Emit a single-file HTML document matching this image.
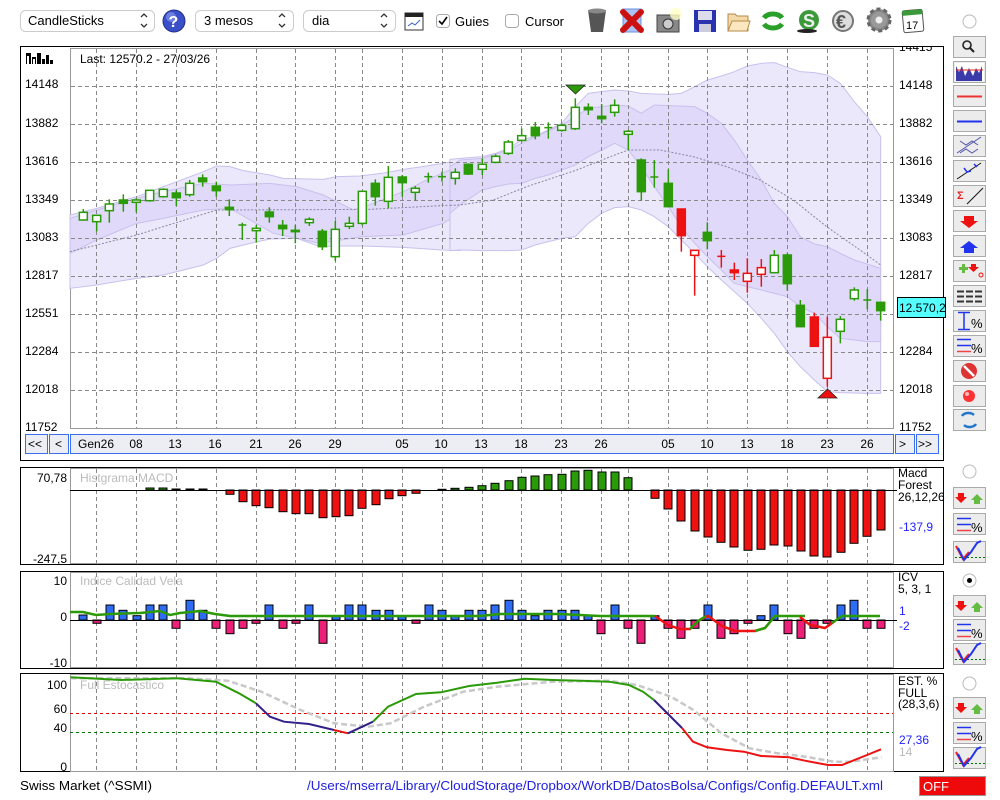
<!DOCTYPE html>
<html><head><meta charset="utf-8"><style>
html,body{margin:0;padding:0;background:#fff;width:1000px;height:800px;overflow:hidden}
svg{display:block;font-family:"Liberation Sans",sans-serif}
</style></head><body>
<svg width="1000" height="800" viewBox="0 0 1000 800" xmlns="http://www.w3.org/2000/svg">
<defs><clipPath id="topclip"><rect x="895" y="47" width="48" height="10"/></clipPath></defs>
<!-- TOOLBAR -->
<g font-size="13" fill="#000">
<rect x="20.5" y="10.5" width="134" height="21" rx="5" fill="#fff" stroke="#ccc"/>
<text x="28" y="25">CandleSticks</text>
<path d="M141 17l3-3 3 3M141 24l3 3 3-3" fill="none" stroke="#333" stroke-width="1.3"/>
<circle cx="174" cy="21" r="11" fill="#3a4fc8" stroke="#22308a"/>
<circle cx="171" cy="17" r="5" fill="#8ea0f0" opacity=".6"/>
<text x="168.5" y="27" font-size="16" font-weight="bold" fill="#fff">?</text>
<rect x="195.5" y="10.5" width="98" height="21" rx="5" fill="#fff" stroke="#ccc"/>
<text x="204" y="25">3 mesos</text>
<path d="M279 17l3-3 3 3M279 24l3 3 3-3" fill="none" stroke="#333" stroke-width="1.3"/>
<rect x="303.5" y="10.5" width="92" height="21" rx="5" fill="#fff" stroke="#ccc"/>
<text x="312" y="25">dia</text>
<path d="M381 17l3-3 3 3M381 24l3 3 3-3" fill="none" stroke="#333" stroke-width="1.3"/>
<rect x="405" y="13" width="18" height="17" fill="#fff" stroke="#333"/>
<rect x="405" y="13" width="18" height="4" fill="#222"/>
<path d="M408 26l4-3 3 2 5-5" stroke="#36c" fill="none"/>
<rect x="436.5" y="14.5" width="13" height="13" rx="3" fill="#fff" stroke="#aaa"/>
<path d="M439 21l3 3 5-7" fill="none" stroke="#000" stroke-width="1.6"/>
<text x="455" y="26">Guies</text>
<rect x="505.5" y="14.5" width="13" height="13" rx="3" fill="#fff" stroke="#aaa"/>
<text x="525" y="26">Cursor</text>
</g>
<!-- toolbar icons -->
<g>
<path d="M588 10h18l-3 22h-12z" fill="#555"/><ellipse cx="597" cy="11" rx="9" ry="2.5" fill="#888"/>
<rect x="623" y="9" width="18" height="23" fill="#a9c4f5" stroke="#6a8fe0"/>
<path d="M623 12l18 18M641 12l-18 18" stroke="#c11" stroke-width="6" stroke-linecap="round"/>
<rect x="657" y="15" width="22" height="17" fill="#888" stroke="#444"/><circle cx="668" cy="24" r="5" fill="#ccc" stroke="#333"/><circle cx="676" cy="14" r="6" fill="#ffffc8" opacity=".8"/>
<rect x="694" y="10" width="22" height="22" fill="#2933b0"/><rect x="698" y="11" width="14" height="9" fill="#dde"/><rect x="699" y="24" width="12" height="8" fill="#ccd"/>
<path d="M728 14h7l2 2h11v15h-20z" fill="#f3d9a8" stroke="#b58a4a"/><path d="M728 31l4-10h18l-3 10z" fill="#fbe7c0" stroke="#b58a4a"/>
<path d="M764 18a10 7 0 0 1 18 0" fill="none" stroke="#2aa02a" stroke-width="5"/><path d="M782 24a10 7 0 0 1-18 0" fill="none" stroke="#2aa02a" stroke-width="5"/>
<circle cx="809" cy="20" r="10" fill="#3a9a3a"/><text x="803" y="27" font-size="18" font-weight="bold" fill="#eee">S</text><ellipse cx="807" cy="31" rx="10" ry="2" fill="#222"/>
<circle cx="843" cy="21" r="10" fill="#ddd" stroke="#777" stroke-width="2"/><text x="836" y="28" font-size="18" font-weight="bold" fill="#555">€</text>
<circle cx="879" cy="20" r="11" fill="#888" stroke="#666" stroke-width="3" stroke-dasharray="4 3"/><circle cx="879" cy="20" r="8" fill="#999"/><circle cx="879" cy="20" r="3.5" fill="#eee"/>
<rect x="903" y="10" width="20" height="22" rx="2" fill="#fff" stroke="#555" transform="rotate(-5 913 21)"/><rect x="903" y="10" width="20" height="5" fill="#3a9a3a" transform="rotate(-5 913 21)"/><text x="906" y="29" font-size="11">17</text>
<circle cx="969.5" cy="21.5" r="6.5" fill="#fff" stroke="#bbb"/>
</g>

<!-- MAIN CHART FRAME -->
<rect x="20.5" y="46.5" width="923" height="414" fill="#fff" stroke="#000"/>
<rect x="70.5" y="48.5" width="823" height="380" fill="#fff" stroke="#999"/>
<g transform="translate(20,40) scale(0.33333)">
<path d="M150,525 230,505 350,470 430,440 550,395 590,378 630,380 670,392 750,405 790,415 910,418 950,410 1020,408 1100,398 1150,388 1220,378 1300,364 1320,360 L1320,632 1266,630 1150,622 1027,618 950,618 900,620 830,595 750,597 700,608 630,625 590,655 550,675 510,685 430,705 350,715 230,735 150,745Z" fill="#ece8fc" stroke="#c8c0ec" stroke-width="3"/>
<path d="M150,535 230,510 350,475 430,455 550,430 590,432 630,435 750,430 830,440 910,465 1000,510 1060,490 1150,455 1220,420 1300,385 1320,380 L1320,520 1270,550 1150,585 1027,590 900,610 760,580 630,505 550,510 430,535 350,550 230,600 150,640Z" fill="#e0d9fa" stroke="#c8c0ec" stroke-width="3"/>
<path d="M150,635 350,585 590,510 630,510 1050,508 1320,494" fill="none" stroke="#8a86a0" stroke-width="3" stroke-dasharray="6 5"/>
</g>
<g transform="translate(460,40) scale(0.33333)">
<path d="M-30,358 0,355 67,350 107,340 145,325 185,300 226,288 265,270 305,250 346,200 385,160 425,155 464,150 505,153 544,160 583,162 625,163 664,160 704,140 742,120 784,108 823,95 862,78 904,70 943,68 982,82 1021,95 1063,98 1102,105 1141,130 1183,185 1222,230 1262,290 L1262,1060 1222,1060 1141,1058 1102,1055 1063,1020 1021,980 982,935 943,880 904,835 862,790 823,755 784,720 742,680 704,640 664,600 625,560 583,530 544,510 505,500 464,503 425,520 385,550 346,590 305,595 265,605 226,615 185,630 145,632 107,632 67,632 0,630 -30,632Z" fill="#ece8fc" stroke="#c8c0ec" stroke-width="3"/>
<path d="M-30,380 0,360 67,355 145,330 226,290 305,255 346,230 385,205 464,195 505,198 544,220 583,195 625,197 704,200 742,220 784,250 823,300 862,360 904,420 943,490 982,530 1021,590 1063,612 1102,620 1141,640 1183,660 1262,685 L1262,905 1222,905 1183,900 1141,895 1102,860 1063,820 1021,800 982,770 943,760 904,750 862,740 823,730 784,690 742,650 704,610 664,560 625,500 583,440 544,380 505,330 464,310 425,330 385,350 346,375 305,390 265,405 226,415 185,430 145,432 107,440 67,450 0,495 -30,520Z" fill="#e0d9fa" stroke="#c8c0ec" stroke-width="3"/>
<path d="M-30,496 0,495 100,480 200,440 350,390 464,345 505,330 600,330 700,350 800,380 900,420 1000,480 1100,560 1200,630 1262,675" fill="none" stroke="#8a86a0" stroke-width="3" stroke-dasharray="6 5"/>
</g>
<g stroke="#888" stroke-dasharray="4 3" stroke-width="1">
<path d="M71 86.5H893M71 124.5H893M71 162.5H893M71 200.5H893M71 238.5H893M71 276.5H893M71 314.5H893M71 352.5H893M71 390.5H893"/>
<path d="M96.5 49V428M136.5 49V428M176.5 49V428M216.5 49V428M256.5 49V428M295.5 49V428M335.5 49V428M362.5 49V428M402.5 49V428M442.5 49V428M482.5 49V428M521.5 49V428M561.5 49V428M601.5 49V428M628.5 49V428M668.5 49V428M707.5 49V428M747.5 49V428M787.5 49V428M827.5 49V428M867.5 49V428"/>
</g>
<g transform="translate(20,40) scale(0.33333)" stroke="#2a9a08" stroke-width="4.5" fill="#fff">
<line x1="190" y1="507" x2="190" y2="542"/><rect x="178" y="517" width="24" height="23"/>
<line x1="230" y1="526" x2="230" y2="574"/><rect x="218" y="526" width="24" height="19"/>
<line x1="268" y1="478" x2="268" y2="548"/><rect x="256" y="492" width="24" height="20"/>
<line x1="310" y1="463" x2="310" y2="515"/><rect x="298" y="480" width="24" height="10" fill="#2a9a08"/>
<line x1="349" y1="475" x2="349" y2="517"/><rect x="337" y="480" width="24" height="7"/>
<line x1="389" y1="451" x2="389" y2="485"/><rect x="377" y="451" width="24" height="31"/>
<line x1="430" y1="445" x2="430" y2="473"/><rect x="418" y="448" width="24" height="22"/>
<line x1="469" y1="450" x2="469" y2="498"/><rect x="457" y="459" width="24" height="14" fill="#2a9a08"/>
<line x1="509" y1="420" x2="509" y2="470"/><rect x="497" y="430" width="24" height="34"/>
<line x1="548" y1="403" x2="548" y2="440"/><rect x="536" y="414" width="24" height="11" fill="#2a9a08"/>
<line x1="589" y1="425" x2="589" y2="470"/><rect x="577" y="438" width="24" height="14" fill="#2a9a08"/>
<line x1="628" y1="478" x2="628" y2="528"/><rect x="616" y="502" width="24" height="7" fill="#2a9a08"/>
<line x1="667" y1="548" x2="667" y2="600"/><line x1="655" y1="555" x2="679" y2="555"/>
<line x1="709" y1="555" x2="709" y2="608"/><rect x="697" y="565" width="24" height="7"/>
<line x1="748" y1="502" x2="748" y2="548"/><rect x="736" y="516" width="24" height="14" fill="#2a9a08"/>
<line x1="788" y1="540" x2="788" y2="588"/><rect x="776" y="556" width="24" height="10" fill="#2a9a08"/>
<line x1="826" y1="555" x2="826" y2="610"/><rect x="814" y="571" width="24" height="4" fill="#2a9a08"/>
<line x1="868" y1="532" x2="868" y2="558"/><rect x="856" y="538" width="24" height="10"/>
<line x1="907" y1="567" x2="907" y2="630"/><rect x="895" y="574" width="24" height="46" fill="#2a9a08"/>
<line x1="946" y1="543" x2="946" y2="663"/><rect x="934" y="568" width="24" height="82"/>
<line x1="988" y1="530" x2="988" y2="567"/><rect x="976" y="550" width="24" height="9"/>
<line x1="1027" y1="454" x2="1027" y2="556"/><rect x="1015" y="454" width="24" height="96"/>
<line x1="1066" y1="418" x2="1066" y2="497"/><rect x="1054" y="430" width="24" height="40" fill="#2a9a08"/>
<line x1="1105" y1="378" x2="1105" y2="505"/><rect x="1093" y="412" width="24" height="72"/>
<line x1="1147" y1="405" x2="1147" y2="470"/><rect x="1135" y="411" width="24" height="17" fill="#2a9a08"/>
<line x1="1186" y1="438" x2="1186" y2="482"/><rect x="1174" y="445" width="24" height="12"/>
<line x1="1225" y1="398" x2="1225" y2="428"/><line x1="1213" y1="410" x2="1237" y2="410"/>
<line x1="1266" y1="395" x2="1266" y2="425"/><line x1="1254" y1="410" x2="1278" y2="410"/>
<line x1="1306" y1="385" x2="1306" y2="434"/><rect x="1294" y="397" width="24" height="18"/>
</g>
<g transform="translate(460,40) scale(0.33333)" stroke="#2a9a08" stroke-width="4.5" fill="#fff">
<line x1="25" y1="370" x2="25" y2="405"/><rect x="13" y="373" width="24" height="29" fill="#2a9a08"/>
<line x1="67" y1="355" x2="67" y2="405"/><rect x="55" y="373" width="24" height="15"/>
<line x1="107" y1="343" x2="107" y2="370"/><rect x="95" y="349" width="24" height="18"/>
<line x1="145" y1="300" x2="145" y2="345"/><rect x="133" y="306" width="24" height="34"/>
<line x1="185" y1="265" x2="185" y2="305"/><rect x="173" y="287" width="24" height="14"/>
<line x1="226" y1="246" x2="226" y2="298"/><rect x="214" y="262" width="24" height="25" fill="#2a9a08"/>
<line x1="265" y1="247" x2="265" y2="296"/><line x1="253" y1="263" x2="277" y2="263"/>
<line x1="305" y1="250" x2="305" y2="275"/><rect x="293" y="256" width="24" height="15"/>
<line x1="346" y1="175" x2="346" y2="270"/><rect x="334" y="202" width="24" height="64"/>
<line x1="385" y1="190" x2="385" y2="225"/><rect x="373" y="202" width="24" height="7" fill="#2a9a08"/>
<line x1="425" y1="192" x2="425" y2="250"/><rect x="413" y="229" width="24" height="7" fill="#2a9a08"/>
<line x1="464" y1="178" x2="464" y2="230"/><rect x="452" y="196" width="24" height="21"/>
<line x1="505" y1="270" x2="505" y2="330"/><rect x="493" y="274" width="24" height="9"/>
<line x1="544" y1="355" x2="544" y2="482"/><rect x="532" y="360" width="24" height="95" fill="#2a9a08"/>
<line x1="583" y1="360" x2="583" y2="443"/><line x1="571" y1="411" x2="595" y2="411"/>
<line x1="625" y1="388" x2="625" y2="502"/><rect x="613" y="430" width="24" height="70" fill="#2a9a08"/>
<line x1="742" y1="547" x2="742" y2="628"/><rect x="730" y="577" width="24" height="25" fill="#2a9a08"/>
<line x1="943" y1="630" x2="943" y2="700"/><rect x="931" y="646" width="24" height="52"/>
<line x1="982" y1="640" x2="982" y2="752"/><rect x="970" y="645" width="24" height="86" fill="#2a9a08"/>
<line x1="1021" y1="780" x2="1021" y2="862"/><rect x="1009" y="796" width="24" height="64" fill="#2a9a08"/>
<line x1="1141" y1="828" x2="1141" y2="910"/><rect x="1129" y="838" width="24" height="36"/>
<line x1="1183" y1="742" x2="1183" y2="782"/><rect x="1171" y="750" width="24" height="26"/>
<line x1="1222" y1="747" x2="1222" y2="808"/><line x1="1210" y1="780" x2="1234" y2="780"/>
<line x1="1262" y1="787" x2="1262" y2="842"/><rect x="1250" y="787" width="24" height="25" fill="#2a9a08"/>
<g stroke="#ee1111">
<line x1="664" y1="507" x2="664" y2="635"/><rect x="652" y="507" width="24" height="80" fill="#ee1111"/>
<line x1="704" y1="631" x2="704" y2="767"/><rect x="692" y="631" width="24" height="15"/>
<line x1="784" y1="630" x2="784" y2="683"/><line x1="772" y1="649" x2="796" y2="649"/>
<line x1="823" y1="668" x2="823" y2="720"/><rect x="811" y="690" width="24" height="8" fill="#ee1111"/>
<line x1="862" y1="655" x2="862" y2="758"/><rect x="850" y="700" width="24" height="24"/>
<line x1="904" y1="657" x2="904" y2="740"/><rect x="892" y="683" width="24" height="20"/>
<line x1="1063" y1="818" x2="1063" y2="921"/><rect x="1051" y="831" width="24" height="88" fill="#ee1111"/>
<line x1="1102" y1="830" x2="1102" y2="1040"/><rect x="1090" y="892" width="24" height="123"/>
</g>
</g>
<path d="M566 85h19l-9.5 9z" fill="#2a9a08" stroke="#222" stroke-width=".8"/>
<path d="M818 398h19l-9.5-9z" fill="#ee1111" stroke="#222" stroke-width=".8"/>
<g font-size="12" fill="#000">
<text x="80" y="63">Last: 12570.2 - 27/03/26</text>
<text x="25" y="88">14148</text><text x="25" y="127">13882</text><text x="25" y="165">13616</text><text x="25" y="203">13349</text><text x="25" y="241">13083</text><text x="25" y="279">12817</text><text x="25" y="317">12551</text><text x="25" y="355">12284</text><text x="25" y="393">12018</text><text x="25" y="431">11752</text>
<text x="899" y="89">14148</text><text x="899" y="127">13882</text><text x="899" y="165">13616</text><text x="899" y="203">13349</text><text x="899" y="241">13083</text><text x="899" y="279">12817</text><text x="899" y="355">12284</text><text x="899" y="393">12018</text><text x="899" y="431">11752</text>
<text x="899" y="51" font-size="12" clip-path="url(#topclip)">14415</text>
</g>
<rect x="26" y="53" width="5" height="11" fill="#000"/><rect x="32" y="57" width="4" height="7" fill="#000"/><rect x="37" y="53" width="4" height="11" fill="#000"/><rect x="42" y="59" width="3" height="5" fill="#000"/><rect x="46" y="55" width="3" height="9" fill="#000"/><rect x="50" y="60" width="3" height="4" fill="#000"/>
<rect x="27" y="56" width="2" height="8" fill="#fff"/><rect x="33" y="59" width="2" height="5" fill="#fff"/>
<rect x="897.5" y="297.5" width="48" height="20" fill="#5ff" stroke="#000"/>
<text x="899" y="312" font-size="12">12.570,2</text>
<g font-size="12">
<rect x="25.5" y="434.5" width="22" height="19" fill="#eceef3" stroke="#3a6ff0"/><text x="28" y="448">&lt;&lt;</text>
<rect x="49.5" y="434.5" width="19" height="19" fill="#eceef3" stroke="#3a6ff0"/><text x="55" y="448">&lt;</text>
<rect x="70.5" y="434.5" width="823" height="19" fill="#eceef3" stroke="#3a6ff0"/>
<rect x="895.5" y="434.5" width="19" height="19" fill="#eceef3" stroke="#3a6ff0"/><text x="899" y="448">&gt;</text>
<rect x="916.5" y="434.5" width="22" height="19" fill="#eceef3" stroke="#3a6ff0"/><text x="918" y="448">&gt;&gt;</text>
<g text-anchor="middle">
<text x="96" y="448">Gen26</text><text x="136" y="448">08</text><text x="175" y="448">13</text><text x="215" y="448">16</text><text x="256" y="448">21</text><text x="295" y="448">26</text><text x="335" y="448">29</text><text x="402" y="448">05</text><text x="441" y="448">10</text><text x="481" y="448">13</text><text x="521" y="448">18</text><text x="561" y="448">23</text><text x="601" y="448">26</text><text x="668" y="448">05</text><text x="707" y="448">10</text><text x="747" y="448">13</text><text x="787" y="448">18</text><text x="827" y="448">23</text><text x="867" y="448">26</text>
</g></g>

<rect x="20.5" y="467.5" width="923" height="97" fill="#fff" stroke="#000"/>
<rect x="70.5" y="468.5" width="823" height="95" fill="#fff" stroke="#999"/>
<rect x="20.5" y="571.5" width="923" height="97" fill="#fff" stroke="#000"/>
<rect x="70.5" y="572.5" width="823" height="95" fill="#fff" stroke="#999"/>
<rect x="20.5" y="673.5" width="923" height="98" fill="#fff" stroke="#000"/>
<rect x="70.5" y="674.5" width="823" height="97" fill="#fff" stroke="#999"/>
<g stroke="#888" stroke-dasharray="4 3">
<path d="M96.5 469V563M136.5 469V563M176.5 469V563M216.5 469V563M256.5 469V563M295.5 469V563M335.5 469V563M362.5 469V563M402.5 469V563M442.5 469V563M482.5 469V563M521.5 469V563M561.5 469V563M601.5 469V563M628.5 469V563M668.5 469V563M707.5 469V563M747.5 469V563M787.5 469V563M827.5 469V563M867.5 469V563"/>
<path d="M96.5 573V667M136.5 573V667M176.5 573V667M216.5 573V667M256.5 573V667M295.5 573V667M335.5 573V667M362.5 573V667M402.5 573V667M442.5 573V667M482.5 573V667M521.5 573V667M561.5 573V667M601.5 573V667M628.5 573V667M668.5 573V667M707.5 573V667M747.5 573V667M787.5 573V667M827.5 573V667M867.5 573V667"/>
<path d="M96.5 675V771M136.5 675V771M176.5 675V771M216.5 675V771M256.5 675V771M295.5 675V771M335.5 675V771M362.5 675V771M402.5 675V771M442.5 675V771M482.5 675V771M521.5 675V771M561.5 675V771M601.5 675V771M628.5 675V771M668.5 675V771M707.5 675V771M747.5 675V771M787.5 675V771M827.5 675V771M867.5 675V771"/>
</g>
<g font-size="12"><text x="80" y="482" fill="#bbb">Histgrama MACD</text>
<text x="67" y="482" text-anchor="end">70,78</text><text x="67" y="563" text-anchor="end">-247,5</text>
<text x="898" y="477">Macd</text><text x="898" y="489">Forest</text><text x="898" y="501">26,12,26</text><text x="899" y="531" fill="#22f">-137,9</text></g>
<g stroke="#000" stroke-width="1" fill="#2a9a08">
<rect x="146" y="488" width="8" height="2"/><rect x="159" y="488" width="8" height="2"/><rect x="172" y="489" width="8" height="1"/><rect x="186" y="489" width="8" height="1"/><rect x="199" y="489" width="8" height="1"/>
<rect x="438" y="489.3" width="8" height="0.7"/><rect x="451" y="488.3" width="8" height="1.7"/><rect x="465" y="487.3" width="8" height="2.7"/><rect x="478" y="485.7" width="8" height="4.3"/><rect x="491" y="483.3" width="8" height="6.7"/><rect x="505" y="480.7" width="8" height="9.3"/><rect x="518" y="477.3" width="8" height="12.7"/><rect x="531" y="476" width="8" height="14"/><rect x="544" y="474.7" width="8" height="15.3"/><rect x="558" y="474.3" width="8" height="15.7"/><rect x="571" y="471" width="8" height="19"/><rect x="584" y="470.3" width="8" height="19.7"/><rect x="598" y="472" width="8" height="18"/><rect x="611" y="472" width="8" height="18"/><rect x="624" y="477.7" width="8" height="12.3"/>
</g>
<g stroke="#000" stroke-width="1" fill="#ee1111">
<rect x="226" y="490" width="8" height="4.3"/><rect x="239" y="490" width="8" height="11.7"/><rect x="252" y="490" width="8" height="15.7"/><rect x="265" y="490" width="8" height="17.7"/><rect x="279" y="490" width="8" height="21.7"/><rect x="292" y="490" width="8" height="23.7"/><rect x="305" y="490" width="8" height="23.7"/><rect x="319" y="490" width="8" height="27.7"/><rect x="332" y="490" width="8" height="26.7"/><rect x="345" y="490" width="8" height="25.7"/><rect x="358" y="490" width="8" height="18.3"/><rect x="372" y="490" width="8" height="14.7"/><rect x="385" y="490" width="8" height="8.7"/><rect x="398" y="490" width="8" height="5.7"/><rect x="412" y="490" width="8" height="3.3"/>
<rect x="651" y="490" width="8" height="8.3"/><rect x="664" y="490" width="8" height="19"/><rect x="677" y="490" width="8" height="31"/><rect x="691" y="490" width="8" height="41"/><rect x="704" y="490" width="8" height="47"/><rect x="717" y="490" width="8" height="52.3"/><rect x="730" y="490" width="8" height="57"/><rect x="744" y="490" width="8" height="60.3"/><rect x="757" y="490" width="8" height="59.3"/><rect x="770" y="490" width="8" height="55"/><rect x="784" y="490" width="8" height="56"/><rect x="797" y="490" width="8" height="61"/><rect x="810" y="490" width="8" height="66"/><rect x="823" y="490" width="8" height="67"/><rect x="837" y="490" width="8" height="62.3"/><rect x="850" y="490" width="8" height="53.3"/><rect x="863" y="490" width="8" height="46.3"/><rect x="877" y="490" width="8" height="40"/>
</g>
<line x1="70" y1="490.5" x2="897" y2="490.5" stroke="#000"/>
<g font-size="12"><text x="80" y="585" fill="#bbb">Indice Calidad Vela</text>
<text x="67" y="585" text-anchor="end">10</text><text x="67" y="621" text-anchor="end">0</text><text x="67" y="667" text-anchor="end">-10</text>
<text x="898" y="581">ICV</text><text x="898" y="593">5, 3, 1</text><text x="899" y="615" fill="#22f">1</text><text x="899" y="630" fill="#22f">-2</text></g>
<g stroke="#000" stroke-width="1" fill="#2f6cf5">
<rect x="79" y="615" width="8" height="5"/><rect x="106" y="605" width="8" height="15"/><rect x="119" y="610.3" width="8" height="9.7"/><rect x="133" y="615.7" width="8" height="4.3"/><rect x="146" y="605" width="8" height="15"/><rect x="159" y="605" width="8" height="15"/><rect x="186" y="600.3" width="8" height="19.7"/><rect x="199" y="610.3" width="8" height="9.7"/><rect x="265" y="605" width="8" height="15"/><rect x="305" y="605" width="8" height="15"/><rect x="332" y="615.7" width="8" height="4.3"/><rect x="345" y="605" width="8" height="15"/><rect x="358" y="605" width="8" height="15"/><rect x="372" y="610.3" width="8" height="9.7"/><rect x="385" y="610.3" width="8" height="9.7"/><rect x="398" y="615.7" width="8" height="4.3"/><rect x="425" y="605" width="8" height="15"/><rect x="438" y="610.3" width="8" height="9.7"/><rect x="451" y="615.7" width="8" height="4.3"/><rect x="465" y="610.3" width="8" height="9.7"/><rect x="478" y="610.3" width="8" height="9.7"/><rect x="491" y="605" width="8" height="15"/><rect x="505" y="600.3" width="8" height="19.7"/><rect x="518" y="610.3" width="8" height="9.7"/><rect x="531" y="615.7" width="8" height="4.3"/><rect x="544" y="610.3" width="8" height="9.7"/><rect x="558" y="610.3" width="8" height="9.7"/><rect x="571" y="610.3" width="8" height="9.7"/><rect x="584" y="615.7" width="8" height="4.3"/><rect x="611" y="605" width="8" height="15"/><rect x="651" y="615.7" width="8" height="4.3"/><rect x="704" y="605" width="8" height="15"/><rect x="757" y="615.7" width="8" height="4.3"/><rect x="770" y="605" width="8" height="15"/><rect x="837" y="605" width="8" height="15"/><rect x="850" y="600.3" width="8" height="19.7"/>
</g>
<g stroke="#000" stroke-width="1" fill="#ee1f78">
<rect x="93" y="620" width="8" height="3.3"/><rect x="172" y="620" width="8" height="8.3"/><rect x="212" y="620" width="8" height="8.3"/><rect x="226" y="620" width="8" height="13.7"/><rect x="239" y="620" width="8" height="8.3"/><rect x="252" y="620" width="8" height="3.3"/><rect x="279" y="620" width="8" height="8.3"/><rect x="292" y="620" width="8" height="3.3"/><rect x="319" y="620" width="8" height="23.3"/><rect x="412" y="620" width="8" height="3.3"/><rect x="597" y="620" width="8" height="13.7"/><rect x="624" y="620" width="8" height="8.3"/><rect x="637" y="620" width="8" height="23.3"/><rect x="664" y="620" width="8" height="8.3"/><rect x="677" y="620" width="8" height="18.3"/><rect x="691" y="620" width="8" height="8.3"/><rect x="717" y="620" width="8" height="18.3"/><rect x="730" y="620" width="8" height="13.7"/><rect x="744" y="620" width="8" height="3.3"/><rect x="784" y="620" width="8" height="13.7"/><rect x="797" y="620" width="8" height="18.3"/><rect x="810" y="620" width="8" height="8.3"/><rect x="823" y="620" width="8" height="3.3"/><rect x="863" y="620" width="8" height="8.3"/><rect x="877" y="620" width="8" height="8.3"/>
</g>
<line x1="70" y1="620.5" x2="897" y2="620.5" stroke="#000"/>
<polyline points="70,612 83,612 96,615 110,614 140,613 160,611 170,615 180,613 200,611 215,614 230,616 300,616 380,616 480,616 500,614 560,614 600,616 630,616 655,616" fill="none" stroke="#2a9a08" stroke-width="2.5"/>
<polyline points="655,616 668,625 680,629 690,629 698,621 708,616 722,626 735,631 755,631 765,628 775,616" fill="none" stroke="#ee1111" stroke-width="2.5"/>
<polyline points="690,629 698,621 706,616" fill="none" stroke="#2a9a08" stroke-width="2.5"/>
<polyline points="755,631 765,628 775,616 795,616 805,616" fill="none" stroke="#2a9a08" stroke-width="2.5"/>
<polyline points="800,617 810,625 825,628 835,621" fill="none" stroke="#ee1111" stroke-width="2.5"/>
<polyline points="832,623 842,616 880,616" fill="none" stroke="#2a9a08" stroke-width="2.5"/>
<g font-size="12"><text x="80" y="689" fill="#bbb">Full Estocastico</text>
<text x="67" y="689" text-anchor="end">100</text><text x="67" y="713" text-anchor="end">60</text><text x="67" y="732" text-anchor="end">40</text><text x="67" y="771" text-anchor="end">0</text>
<text x="898" y="685">EST. %</text><text x="898" y="697">FULL</text><text x="898" y="708">(28,3,6)</text><text x="899" y="744" fill="#22f">27,36</text><text x="899" y="756" fill="#bbb">14</text></g>
<line x1="70" y1="713.5" x2="893" y2="713.5" stroke="#d00" stroke-dasharray="3 3"/>
<line x1="70" y1="732.5" x2="893" y2="732.5" stroke="#070" stroke-dasharray="3 3"/>
<polyline points="70.5,678.3 188,678.3 227.6,680.7 261.3,691.7 300.6,710 334.3,723.3 368,726.7 390.4,723.3 424,706.7 463.3,691.7 497,686.7 553,681.7 609,680.7 637,685 671,696.7 693.4,710 721.5,733.3 749.5,748.3 777.6,753.3 805.6,756.7 833.7,761.7 850.5,761.7 881.4,757.3" fill="none" stroke="#c8c8c8" stroke-width="2.5" stroke-dasharray="6 3"/>
<polyline points="70.5,677.3 121,680 177,678.3 216,681.7 239,693.3 256,703.3" fill="none" stroke="#2a9a08" stroke-width="2"/>
<polyline points="256,703.3 270,716.7 284,721.7 309,724 334,730" fill="none" stroke="#33208a" stroke-width="2"/>
<polyline points="334,730 348,733.3" fill="none" stroke="#ee1111" stroke-width="2"/>
<polyline points="348,733.3 373,721.7" fill="none" stroke="#33208a" stroke-width="2"/>
<polyline points="373,721.7 388,706.7 416,694 441,692.3 469,686 497,682.7 525,678.7 553,680 581,680.7 609,681.7 629,685 643,691.7 654,700" fill="none" stroke="#2a9a08" stroke-width="2"/>
<polyline points="654,700 682,728" fill="none" stroke="#33208a" stroke-width="2"/>
<polyline points="682,728 693,741.7 707,747.3 727,750 744,751.7 761,756 789,757.3 805,760.7 828,765 842,765 867,755 881,749.3" fill="none" stroke="#ee1111" stroke-width="2"/>

<g stroke="#aaa" fill="#ececec">
<rect x="953.5" y="36.5" width="32" height="21"/><rect x="953.5" y="61.5" width="32" height="21"/><rect x="953.5" y="85.5" width="32" height="21"/><rect x="953.5" y="110.5" width="32" height="21"/><rect x="953.5" y="135.5" width="32" height="21"/><rect x="953.5" y="160.5" width="32" height="21"/><rect x="953.5" y="185.5" width="32" height="21"/><rect x="953.5" y="210.5" width="32" height="21"/><rect x="953.5" y="235.5" width="32" height="21"/><rect x="953.5" y="260.5" width="32" height="21"/><rect x="953.5" y="285.5" width="32" height="21"/><rect x="953.5" y="310.5" width="32" height="21"/><rect x="953.5" y="335.5" width="32" height="21"/><rect x="953.5" y="360.5" width="32" height="21"/><rect x="953.5" y="385.5" width="32" height="21"/><rect x="953.5" y="409.5" width="32" height="21"/>
<rect x="953.5" y="487.5" width="32" height="21"/><rect x="953.5" y="513.5" width="32" height="21"/><rect x="953.5" y="541.5" width="32" height="21"/>
<rect x="953.5" y="595.5" width="32" height="21"/><rect x="953.5" y="619.5" width="32" height="21"/><rect x="953.5" y="643.5" width="32" height="21"/>
<rect x="953.5" y="697.5" width="32" height="21"/><rect x="953.5" y="722.5" width="32" height="21"/><rect x="953.5" y="747.5" width="32" height="21"/>
</g>
<circle cx="967" cy="45" r="4" fill="none" stroke="#222" stroke-width="1.6"/><path d="M970 48l4 4" stroke="#222" stroke-width="2"/>
<rect x="955" y="63" width="29" height="18" fill="#fff"/><path d="M956 81V66l3 6 3-6 3 10 4-8 4 8 3-8 3 5 3-7v15z" fill="#3a3aa8"/><path d="M956 70h27" stroke="#e22"/>
<path d="M957 96.5h25" stroke="#e33" stroke-width="2"/>
<path d="M957 121.5h25" stroke="#23e" stroke-width="2"/>
<path d="M957 153l24-16M960 153l6-4 6 4 6-4M960 141l6 4 6-4 6 4" stroke="#55a" fill="none"/>
<path d="M957 179l24-16" stroke="#111"/><path d="M964 168l3 4 4-1M974 164l3 3" stroke="#23e" fill="none" stroke-width="1.5"/>
<path d="M967 204l16-16" stroke="#111"/><text x="957" y="199" font-size="11" fill="#e22" font-weight="bold">Σ</text>
<path d="M964 216h10v5h4l-9 7-9-7h4z" fill="#e11"/>
<path d="M964 253h10v-5h4l-9-7-9 7h4z" fill="#23e"/>
<path d="M959 267h3v-3h3v3h3v3h-3v3h-3v-3h-3z" fill="#6b4"/><path d="M971 264h5v3h3l-5.5 5-5.5-5h3z" fill="#e11"/><circle cx="981" cy="275" r="2" fill="none" stroke="#e11"/>
<path d="M957 291.5h7M966 291.5h7M975 291.5h7M957 296.5h7M966 296.5h7M975 296.5h7M957 301.5h7M966 301.5h7M975 301.5h7" stroke="#333" stroke-width="2"/>
<path d="M958 312.5h12M958 329.5h12M964 313v16" stroke="#23e" stroke-width="1.5"/><text x="971" y="328" font-size="13">%</text>
<path d="M957 339.5h14M957 345.5h14" stroke="#23e" stroke-width="1.5"/><path d="M957 351.5h14" stroke="#e44" stroke-width="1.5"/><text x="971" y="353" font-size="13">%</text>
<circle cx="969" cy="371" r="8" fill="#d33"/><path d="M964 366l10 10" stroke="#fff" stroke-width="2.5"/>
<circle cx="969" cy="396" r="6" fill="#f33"/><circle cx="967" cy="394" r="2" fill="#fbb"/>
<path d="M962 416a7 5 0 0 1 12-1M976 424a7 5 0 0 1-12 1" stroke="#27c" stroke-width="2.5" fill="none"/>
<g>
<circle cx="969.5" cy="471.5" r="6.5" fill="#fff" stroke="#bbb"/>
<circle cx="969.5" cy="580.5" r="6.5" fill="#fff" stroke="#bbb"/><circle cx="969.5" cy="580.5" r="2.5" fill="#000"/>
<circle cx="969.5" cy="683.5" r="6.5" fill="#fff" stroke="#bbb"/>
</g>
<g id="b1"><path d="M958 493h6v4h3l-6 6-6-6h3z" fill="#e11"/><path d="M974 504h6v-4h3l-6-6-6 6h3z" fill="#6b4"/></g>
<use href="#b1" transform="translate(0,108)"/><use href="#b1" transform="translate(0,210)"/>
<g id="b2"><path d="M957 518.5h14M957 524.5h14" stroke="#23e" stroke-width="1.5"/><path d="M957 530.5h14" stroke="#e44" stroke-width="1.5"/><text x="971" y="532" font-size="13">%</text></g>
<use href="#b2" transform="translate(0,106)"/><use href="#b2" transform="translate(0,209)"/>
<g id="b3"><path d="M955 557.5h30" stroke="#070" stroke-dasharray="2 2"/><path d="M956 546l7 13 6-7" stroke="#e22" stroke-width="2" fill="none"/><path d="M958 548l6 12 7-8 6-9 4-2" stroke="#23e" stroke-width="2" fill="none"/></g>
<use href="#b3" transform="translate(0,102)"/><use href="#b3" transform="translate(0,206)"/>
<text x="20" y="790" font-size="13" textLength="132" lengthAdjust="spacingAndGlyphs">Swiss Market (^SSMI)</text>
<text x="307" y="790" font-size="13" fill="#22d" textLength="576" lengthAdjust="spacingAndGlyphs">/Users/mserra/Library/CloudStorage/Dropbox/WorkDB/DatosBolsa/Configs/Config.DEFAULT.xml</text>
<rect x="919.5" y="776.5" width="66" height="19" fill="#ee0a0a" stroke="#999"/>
<text x="923" y="791" font-size="13" fill="#fff">OFF</text>
</svg>
</body></html>
